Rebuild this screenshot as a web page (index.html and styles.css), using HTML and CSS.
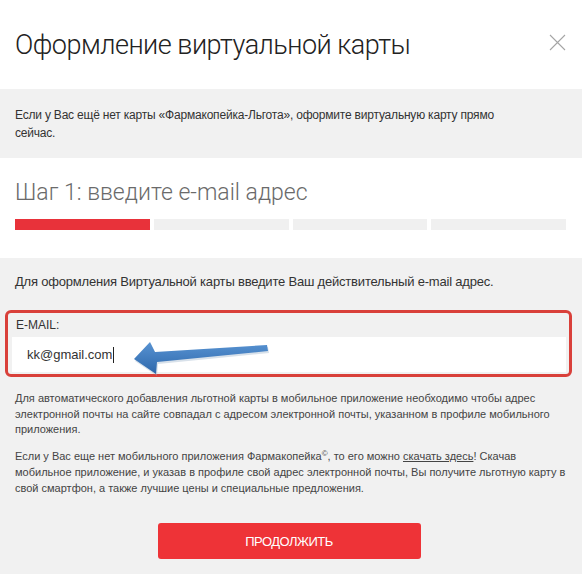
FILE: index.html
```html
<!DOCTYPE html>
<html lang="ru">
<head>
    <meta charset="UTF-8">
    <meta name="viewport" content="width=device-width, initial-scale=1.0">
    <title>Оформление виртуальной карты</title>
    <link rel="stylesheet" href="styles.css">
</head>
<body>
    <div class="modal">
        <div class="modal-header">
            <h1>Оформление виртуальной карты</h1>
            <button class="close" type="button" aria-label="Закрыть">
                <svg width="17" height="17" viewBox="0 0 17 17">
                    <path d="M1 1 L16 16 M16 1 L1 16" stroke="#a5a5a5" stroke-width="1.1" fill="none"/>
                </svg>
            </button>
        </div>

        <div class="intro">
            Если у Вас ещё нет карты «Фармакопейка-Льгота», оформите виртуальную карту прямо сейчас.
        </div>

        <div class="step">
            <h2>Шаг 1: введите e-mail адрес</h2>
            <div class="progress">
                <span class="done"></span>
                <span></span>
                <span></span>
                <span></span>
            </div>
        </div>

        <form class="step-form">
            <p class="lead">Для оформления Виртуальной карты введите Ваш действительный e-mail адрес.</p>

            <div class="field">
                <label for="email">E-MAIL:</label>
                <div class="input-wrap">
                    <input type="text" id="email" value="kk@gmail.com">
                    <span class="caret"></span>
                    <!-- стрелка-подсказка поверх поля -->
                    <svg class="arrow" width="150" height="40" viewBox="0 0 150 40">
                        <defs>
                            <linearGradient id="arrowFill" x1="0" y1="0" x2="0" y2="1">
                                <stop offset="0" stop-color="#5893d2"/>
                                <stop offset="1" stop-color="#2d67ab"/>
                            </linearGradient>
                        </defs>
                        <polygon points="4,18 20,1 25,11 137,4 138,10 27,21 26,33" fill="#8fa8c4" opacity="0.35" transform="translate(1,2)"/>
                        <polygon points="4,18 20,1 25,11 137,4 138,10 27,21 26,33" fill="url(#arrowFill)"/>
                    </svg>
                </div>
            </div>

            <div class="notes">
                <p>Для автоматического добавления льготной карты в мобильное приложение необходимо чтобы адрес электронной почты на сайте совпадал с адресом электронной почты, указанном в профиле мобильного приложения.</p>
                <p>Если у Вас еще нет мобильного приложения Фармакопейка<span class="copy">©</span>, то его можно <a href="#">скачать здесь</a>! Скачав мобильное приложение, и указав в профиле свой адрес электронной почты, Вы получите льготную карту в свой смартфон, а также лучшие цены и специальные предложения.</p>
            </div>

            <div class="actions">
                <button type="submit" class="btn-next">Продолжить</button>
            </div>
        </form>
    </div>
</body>
</html>
```

FILE: styles.css
```css
body {
    margin: 0;
    background-color: #fff;
    font-family: 'Liberation Sans', Arial, sans-serif;
    color: #333;
}

.modal {
    width: 582px;
    height: 574px;
    overflow: hidden;
    background-color: #f1f1f1;
}

.modal-header {
    background-color: #fff;
    height: 89px;
    padding: 0 16px 0 15px;
    display: flex;
    align-items: center;
    justify-content: space-between;
    box-sizing: border-box;
}

.modal-header h1 {
    margin: 0;
    font-family: 'Roboto', 'Liberation Sans', sans-serif;
    font-weight: 300;
    font-size: 27px;
    color: #222;
    letter-spacing: -0.5px;
}

.close {
    background: none;
    border: none;
    padding: 0;
    cursor: pointer;
    margin-top: -4px;
}

.close svg {
    display: block;
}

.intro {
    padding: 17px 80px 16px 15px;
    font-size: 12px;
    letter-spacing: -0.2px;
    line-height: 18px;
    color: #333;
}

.step {
    background-color: #fff;
    padding: 21px 16px 28px 15px;
}

.step h2 {
    margin: 0 0 12px;
    font-family: 'Roboto', 'Liberation Sans', sans-serif;
    font-weight: 300;
    font-size: 23px;
    line-height: 28px;
    color: #6a6a6a;
}

.progress {
    display: flex;
    gap: 4px;
    height: 11px;
}

.progress span {
    flex: 1;
    background-color: #f0f0f0;
}

.progress span.done {
    background-color: #e8323a;
}

.step-form {
    padding: 15px 0 0;
}

.lead {
    margin: 0 15px 19px;
    font-size: 13px;
    letter-spacing: -0.2px;
    line-height: 18px;
}

.field {
    margin: 0 10px 0 5px;
    border: 3px solid #d9403a;
    border-radius: 6px;
    padding: 5px 3px 2px 4px;
}

.field label {
    display: block;
    padding-left: 4px;
    font-size: 12px;
    line-height: 14px;
    margin-bottom: 5px;
    color: #333;
}

.input-wrap {
    position: relative;
}

.input-wrap input {
    display: block;
    width: 100%;
    height: 35px;
    box-sizing: border-box;
    border: none;
    outline: none;
    background-color: #fff;
    padding: 0 15px;
    font-family: 'Liberation Sans', Arial, sans-serif;
    font-size: 13px;
    color: #333;
}

.caret {
    position: absolute;
    left: 101px;
    top: 10px;
    width: 1px;
    height: 16px;
    background-color: #222;
}

.arrow {
    position: absolute;
    left: 118px;
    top: 4px;
}

.notes {
    margin: 14px 15px 0;
    font-size: 11px;
    line-height: 15.5px;
    color: #444;
}

.notes p {
    margin: 0 0 11px;
}

.notes .copy {
    position: relative;
    top: -4px;
    font-size: 8px;
}

.notes a {
    color: #444;
    text-decoration: underline;
}

.actions {
    display: flex;
    justify-content: center;
    padding-top: 16px;
}

.btn-next {
    width: 263px;
    height: 36px;
    background-color: #ee3337;
    color: #fff;
    border: none;
    border-radius: 3px;
    font-family: 'Liberation Sans', Arial, sans-serif;
    font-size: 13px;
    text-transform: uppercase;
    letter-spacing: -0.5px;
    cursor: pointer;
    margin-left: -4px;
}
```
